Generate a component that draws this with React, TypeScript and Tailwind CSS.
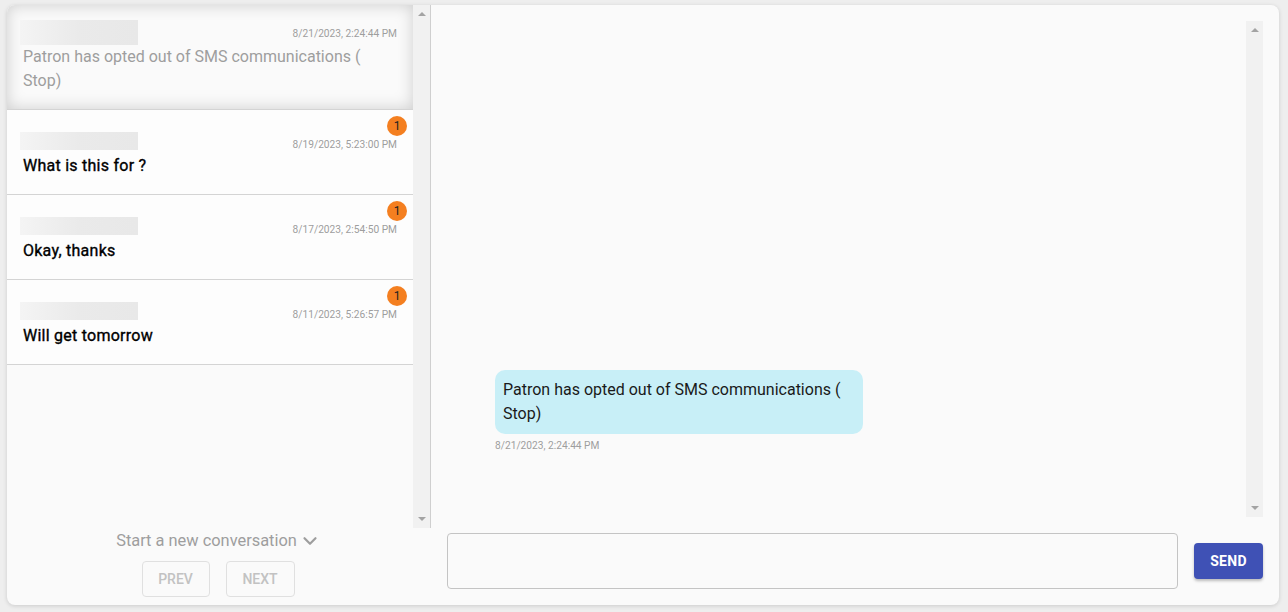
import React from "react";

interface ConversationProps {
  date: string;
  text: string;
  unread?: number;
  selected?: boolean;
}

const conversations: ConversationProps[] = [
  { date: "8/21/2023, 2:24:44 PM", text: "Patron has opted out of SMS communications ( Stop)", selected: true },
  { date: "8/19/2023, 5:23:00 PM", text: "What is this for ?", unread: 1 },
  { date: "8/17/2023, 2:54:50 PM", text: "Okay, thanks", unread: 1 },
  { date: "8/11/2023, 5:26:57 PM", text: "Will get tomorrow", unread: 1 },
];

const Arrow = ({ up }: { up?: boolean }) => (
  <div
    className={
      up
        ? "w-0 h-0 border-l-[4px] border-r-[4px] border-b-[4px] border-l-transparent border-r-transparent border-b-[#a3a3a3]"
        : "w-0 h-0 border-l-[4px] border-r-[4px] border-t-[4px] border-l-transparent border-r-transparent border-t-[#a3a3a3]"
    }
  />
);

const FakeScrollbar = () => (
  <div className="w-[17px] h-full bg-[#f1f1f1] flex flex-col items-center justify-between py-[7px]">
    <Arrow up />
    <Arrow />
  </div>
);

const BlurredName = ({ tall }: { tall?: boolean }) => (
  <div
    className={`${tall ? "h-[25px]" : "h-[18px]"} w-[118px] bg-gradient-to-r from-[#f4f4f4] via-[#eaeaea] to-[#e8e8e8] blur-[0.5px]`}
  />
);

const ConversationItem: React.FC<ConversationProps> = ({ date, text, unread, selected }) => {
  return (
    <div
      className={`relative border-b border-[#d4d4d4] px-[13px] ${
        selected ? "pt-[15px] pb-[16px] shadow-[inset_0_0_16px_rgba(0,0,0,0.18)] bg-[#fafafa]" : "pt-[22px] pb-[16px] bg-[#fdfdfd]"
      }`}
    >
      {unread ? (
        <div className="absolute top-[6px] right-[6px] w-5 h-5 rounded-full bg-[#f47f20] flex items-center justify-center text-[12px] text-[#222]">
          {unread}
        </div>
      ) : null}
      <div className="flex justify-between items-end pr-[3px]">
        <BlurredName tall={selected} />
        <span className={`text-[10.2px] leading-[12px] text-[#9e9e9e] ${selected ? "mb-[5px]" : "-mb-[1px]"}`}>{date}</span>
      </div>
      <p
        className={`pl-[3px] pr-[30px] text-[16px] leading-6 ${
          selected
            ? "text-[#9e9e9e] mt-0"
            : "text-black font-normal mt-[4px] tracking-[0.25px] [-webkit-text-stroke:0.35px_black]"
        }`}
      >
        {text}
      </p>
    </div>
  );
};

export default function App() {
  return (
    <div className="w-[1288px] h-[612px] bg-[#eeeeee] pt-[5px] pl-[7px] font-['Roboto',sans-serif]">
      <div className="w-[1272px] h-[600px] rounded-lg bg-[#fafafa] shadow-[0_1px_4px_rgba(0,0,0,0.15)] flex overflow-hidden">
        {/* left side */}
        <div className="w-[424px] flex flex-col">
          <div className="h-[523px] flex border-r border-[#cfcfcf]">
            <div className="w-[406px] h-full bg-[#fafafa]">
              {conversations.map((c, i) => (
                <ConversationItem key={i} {...c} />
              ))}
            </div>
            <FakeScrollbar />
          </div>
          <div className="flex flex-col items-center pt-[1px]">
            <button className="flex items-center gap-[2px] text-[16.4px] leading-6 text-[#9e9e9e] -ml-[1px]">
              Start a new conversation
              <svg width="22" height="22" viewBox="0 0 24 24" fill="none" stroke="#9e9e9e" strokeWidth="2.4" strokeLinecap="round" strokeLinejoin="round">
                <path d="m6 9 6 6 6-6" />
              </svg>
            </button>
            <div className="flex gap-4 mt-[8px] -ml-[2px]">
              <button className="w-[68px] h-9 rounded border border-[#e0e0e0] text-[14px] font-medium text-[#c2c2c2]">PREV</button>
              <button className="w-[69px] h-9 rounded border border-[#e0e0e0] text-[14px] font-medium text-[#c2c2c2]">NEXT</button>
            </div>
          </div>
        </div>

        {/* right side */}
        <div className="flex-1 flex flex-col px-4 pt-4">
          <div className="h-[496px] flex">
            <div className="flex-1 flex flex-col justify-end pl-12 pb-[65px]">
              <div className="w-[368px] rounded-[10px] bg-[#c8eff7] px-2 py-2 text-[16px] leading-6 text-[#1a1a1a]">
                Patron has opted out of SMS communications ( Stop)
              </div>
              <span className="mt-[6px] text-[10.2px] leading-[12px] text-[#9e9e9e]">8/21/2023, 2:24:44 PM</span>
            </div>
            <FakeScrollbar />
          </div>
          <div className="flex items-center gap-4 mt-4">
            <textarea className="flex-1 h-[56px] rounded border border-[#c4c4c4] bg-[#fafafa] resize-none outline-none" />
            <button className="w-[69px] h-9 rounded bg-[#3f51b5] text-white text-[14px] font-bold tracking-[0.3px] shadow-[0_2px_3px_rgba(0,0,0,0.25)]">
              SEND
            </button>
          </div>
        </div>
      </div>
    </div>
  );
}
